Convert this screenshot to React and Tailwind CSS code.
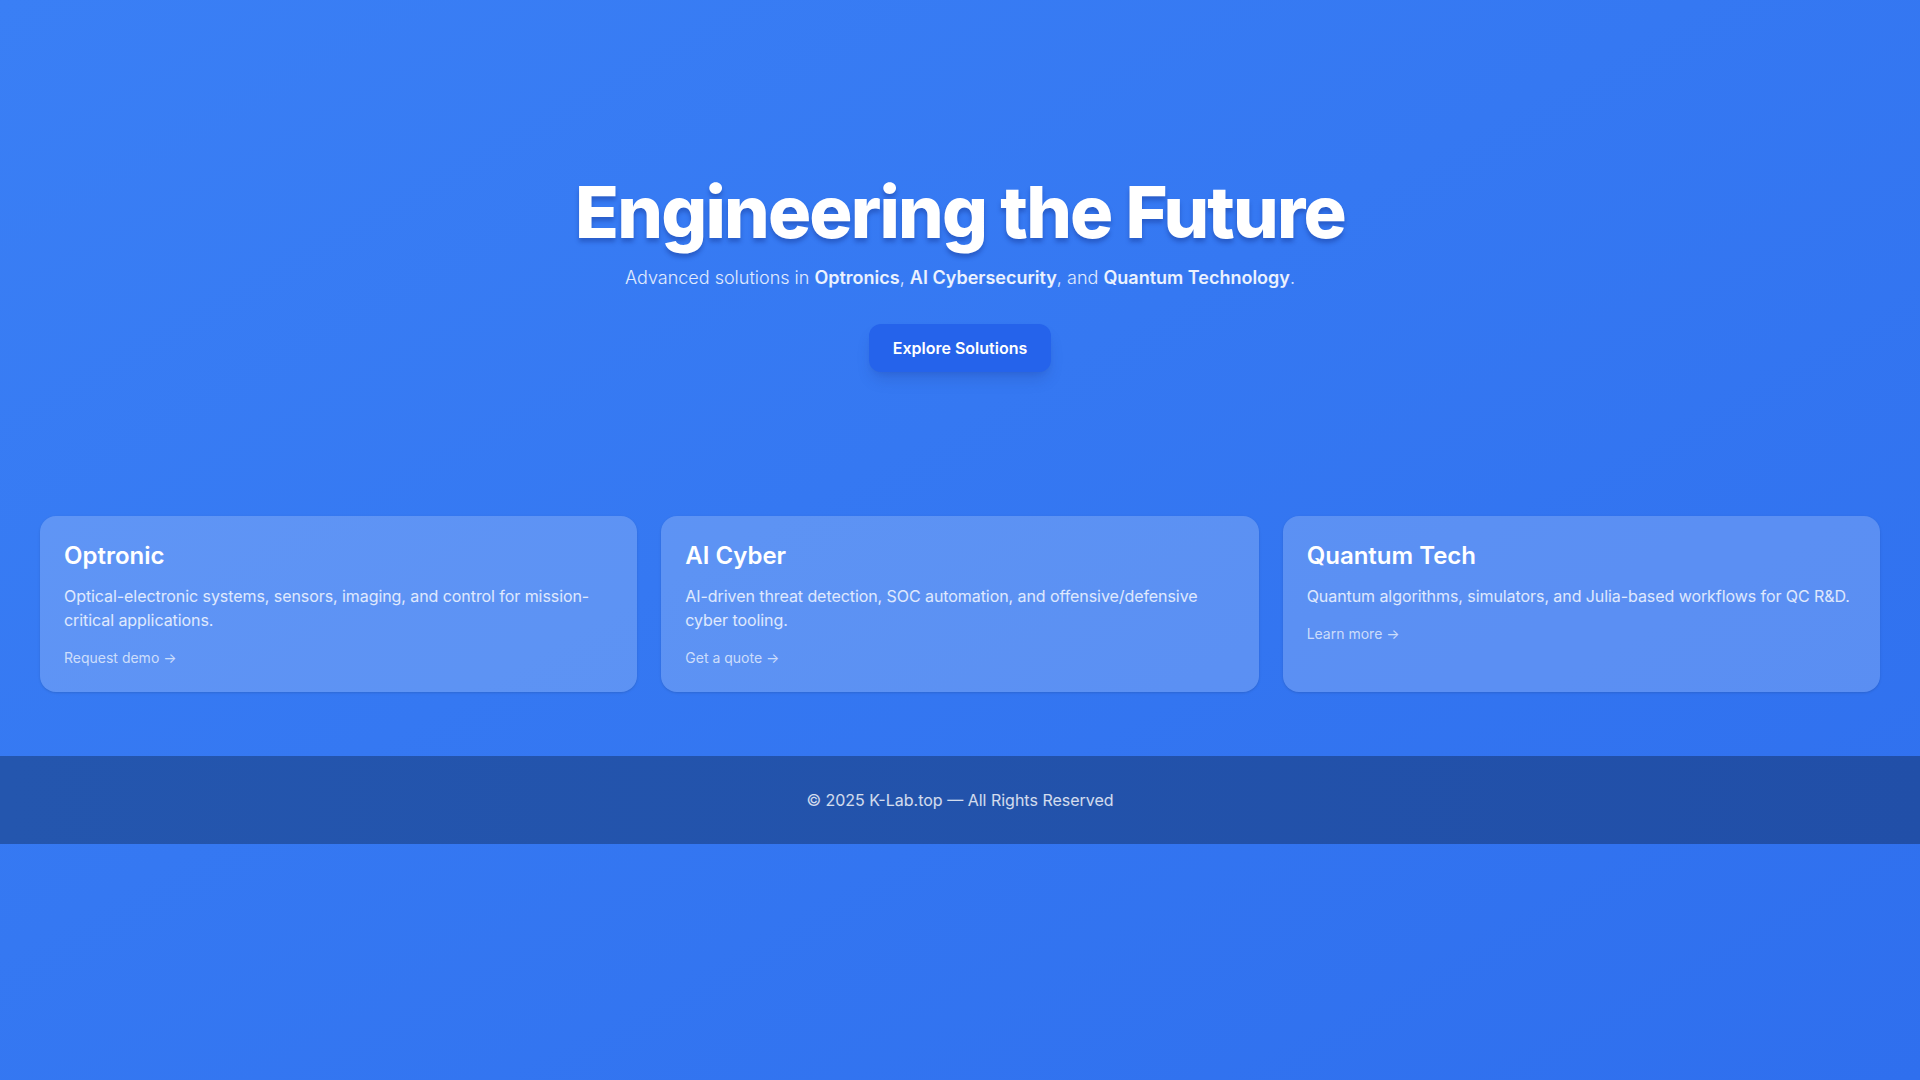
export default function App() {
  const cards = [
    {
      title: "Optronic",
      desc: "Optical-electronic systems, sensors, imaging, and control for mission-critical applications.",
      link: "Request demo →",
    },
    {
      title: "AI Cyber",
      desc: "AI-driven threat detection, SOC automation, and offensive/defensive cyber tooling.",
      link: "Get a quote →",
    },
    {
      title: "Quantum Tech",
      desc: "Quantum algorithms, simulators, and Julia-based workflows for QC R&D.",
      link: "Learn more →",
    },
  ];
  return (
    <div
      className="min-h-screen bg-gradient-to-br from-[#3a7ff5] to-[#2f6fee] text-white"
      style={{ fontFamily: "Inter, 'Noto Sans', sans-serif" }}
    >
      <section className="flex flex-col items-center pt-[176px] pb-[144px] text-center">
        <h1 className="text-7xl leading-none font-extrabold tracking-tight [text-shadow:0_4px_4px_rgba(20,50,140,0.4)]">
          Engineering the Future
        </h1>
        <p className="mt-4 text-lg leading-7 font-light text-white/85">
          Advanced solutions in <span className="font-semibold text-white/90">Optronics</span>,{" "}
          <span className="font-semibold text-white/90">AI Cybersecurity</span>, and{" "}
          <span className="font-semibold text-white/90">Quantum Technology</span>.
        </p>
        <button className="mt-8 rounded-xl bg-[#2563eb] px-6 py-3 text-base leading-6 font-semibold text-white shadow-lg shadow-blue-900/20">
          Explore Solutions
        </button>
      </section>

      <section className="grid grid-cols-3 gap-6 px-10 pb-16">
        {cards.map((c) => (
          <div
            key={c.title}
            className="rounded-2xl bg-white/20 p-6 shadow-sm"
          >
            <h3 className="text-2xl leading-8 font-semibold text-white">{c.title}</h3>
            <p className="mt-3 text-base leading-6 font-normal tracking-[-0.07px] text-white/80">{c.desc}</p>
            <a className="mt-4 block text-sm leading-5 text-white/70">{c.link}</a>
          </div>
        ))}
      </section>

      <footer className="bg-gradient-to-r from-[#2456ae] to-[#214fa8] py-8 text-center text-base leading-6 text-white/80">
        © 2025 K-Lab.top — All Rights Reserved
      </footer>
    </div>
  );
}
